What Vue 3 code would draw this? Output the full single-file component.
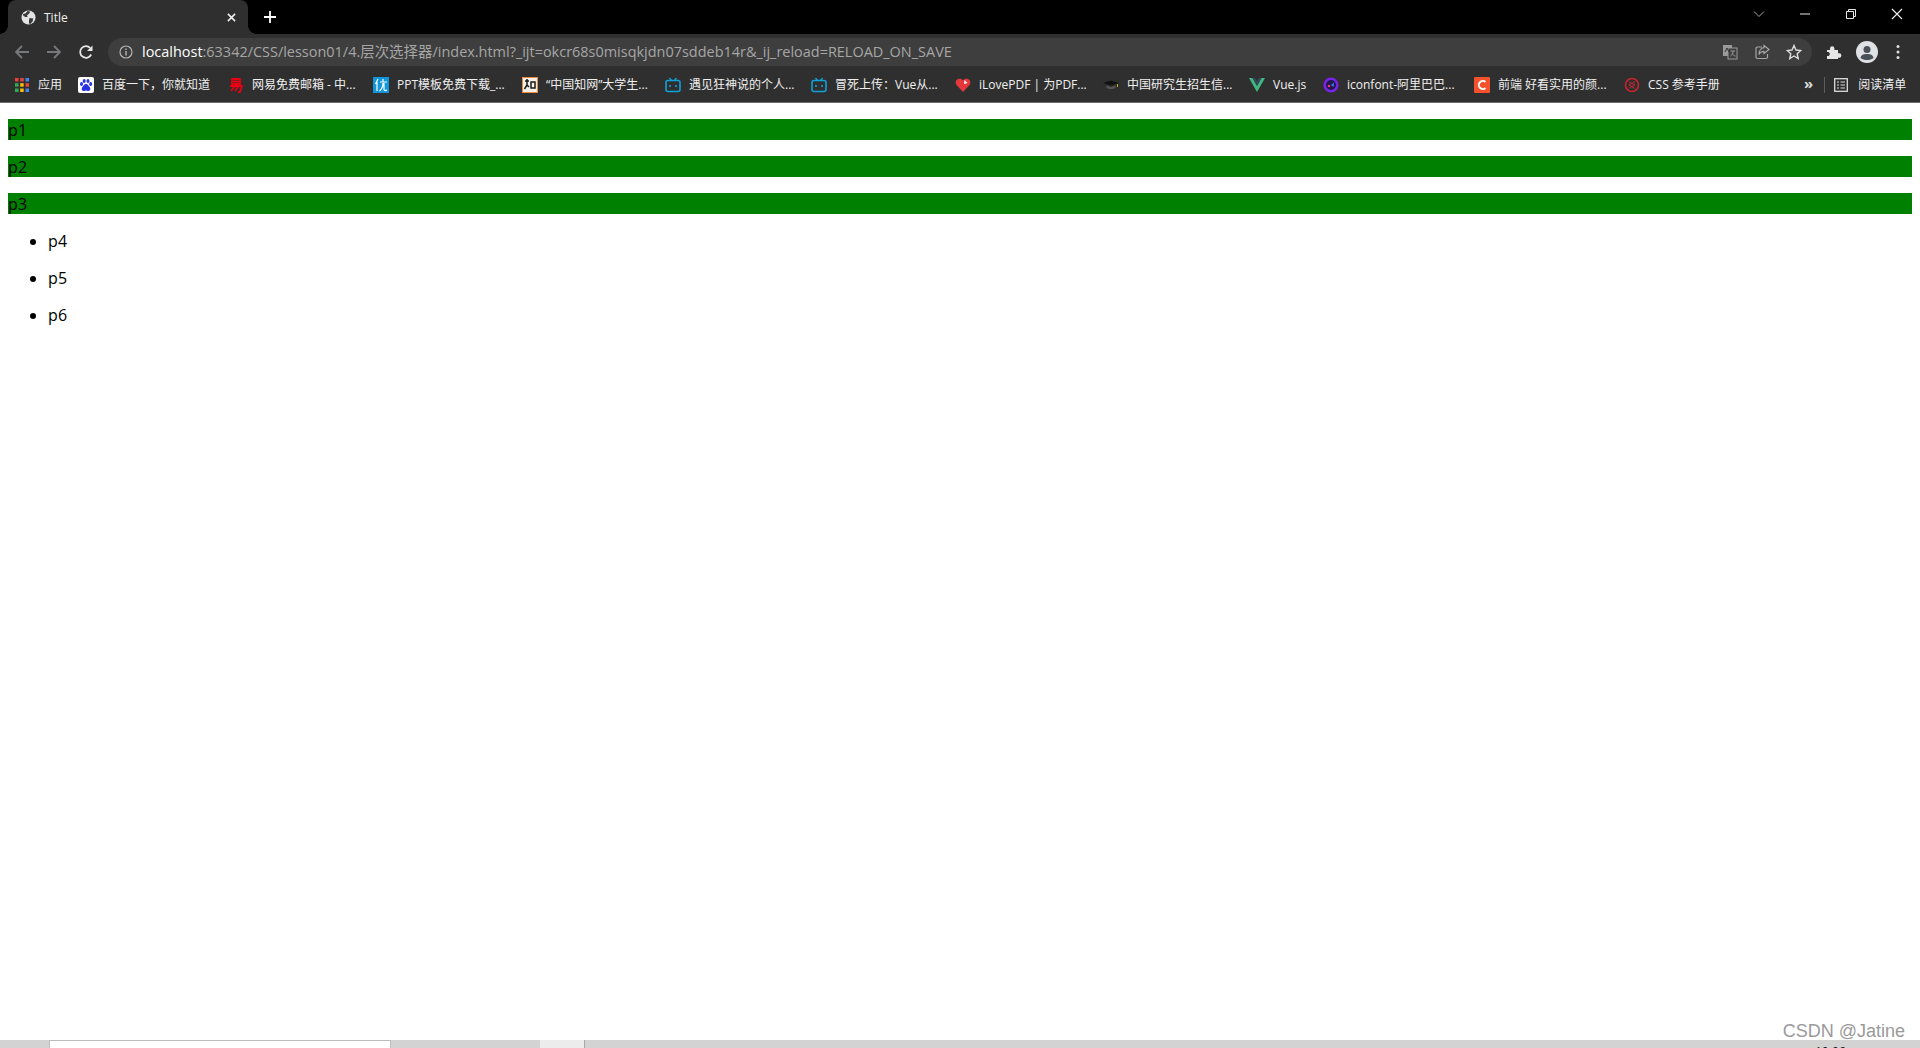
<script setup>
const bookmarks = [
  { icon: 'apps', label: '应用', width: 64 },
  { icon: 'baidu', label: '百度一下，你就知道', width: 150 },
  { icon: 'netease', label: '网易免费邮箱 - 中...', width: 145 },
  { icon: 'you', label: 'PPT模板免费下载_...', width: 149 },
  { icon: 'zhi', label: '“中国知网”大学生...', width: 143 },
  { icon: 'bili', label: '遇见狂神说的个人...', width: 146 },
  { icon: 'bili', label: '冒死上传：Vue从...', width: 144 },
  { icon: 'heart', label: 'iLovePDF | 为PDF...', width: 148 },
  { icon: 'cap', label: '中国研究生招生信...', width: 146 },
  { icon: 'vue', label: 'Vue.js', width: 74 },
  { icon: 'iconfont', label: 'iconfont-阿里巴巴...', width: 151 },
  { icon: 'c', label: '前端 好看实用的颜...', width: 150 },
  { icon: 'css', label: 'CSS 参考手册', width: 120 }
]
const paragraphs = ['p1', 'p2', 'p3']
const items = ['p4', 'p5', 'p6']
</script>

<template>
  <div class="window">
    <header class="chrome">
      <div class="tabstrip">
        <div class="tab">
          <svg class="favicon" viewBox="0 0 16 16">
            <circle cx="8" cy="8" r="7.5" fill="#e4e4e4" />
            <path d="M2 4.5 5 3.5 7 1 10 1.5 8.5 4 6.5 5.5 7 7.5 4.5 7.5 2.5 6ZM9 8.5 13 9 12.5 12 10 15 8.5 14.5 8.5 11.5Z" fill="#3a3a3a" />
          </svg>
          <span class="tab-title">Title</span>
          <svg class="tab-close" viewBox="0 0 10 10"><path d="M1 1 9 9M9 1 1 9" stroke="#f0f0f0" stroke-width="1.7" /></svg>
        </div>
        <svg class="new-tab" viewBox="0 0 12 12"><path d="M6 0V12M0 6H12" stroke="#fff" stroke-width="1.8" /></svg>
        <div class="window-controls">
          <svg class="ctl" viewBox="0 0 12 12"><path d="M1 3.5 6 8.5 11 3.5" fill="none" stroke="#a8a8a8" /></svg>
          <svg class="ctl" viewBox="0 0 12 12"><path d="M1 6H11" stroke="#e8e8e8" /></svg>
          <svg class="ctl" viewBox="0 0 12 12"><path d="M1.5 3.5H8.5V10.5H1.5ZM3.5 3.5V1.5H10.5V8.5H8.5" fill="none" stroke="#e8e8e8" /></svg>
          <svg class="ctl" viewBox="0 0 12 12"><path d="M1 1 11 11M11 1 1 11" stroke="#f0f0f0" stroke-width="1.1" /></svg>
        </div>
      </div>

      <div class="toolbar">
        <svg class="nav" viewBox="0 0 16 16"><path d="M15 8H2M8 2 2 8 8 14" fill="none" stroke="#77787a" stroke-width="1.8" /></svg>
        <svg class="nav" viewBox="0 0 16 16"><path d="M1 8H14M8 2 14 8 8 14" fill="none" stroke="#77787a" stroke-width="1.8" /></svg>
        <svg class="nav" viewBox="0 0 16 16"><path d="M13.2 10.5A5.8 5.8 0 1 1 12.2 4" fill="none" stroke="#e6e6e6" stroke-width="1.8" /><path d="M14.5 1.5V7H9Z" fill="#e6e6e6" /></svg>
        <div class="omnibox">
          <svg class="info" viewBox="0 0 14 14"><circle cx="7" cy="7" r="6" fill="none" stroke="#b4b4b4" stroke-width="1.2" /><path d="M7 6V10.5M7 3.4V5" stroke="#b4b4b4" stroke-width="1.4" /></svg>
          <div class="url"><span class="host">localhost</span>:63342/CSS/lesson01/4.层次选择器/index.html?_ijt=okcr68s0misqkjdn07sddeb14r&amp;_ij_reload=RELOAD_ON_SAVE</div>
          <svg class="omni-icon" viewBox="0 0 16 16"><rect x="1" y="1" width="9" height="11" fill="#9a9a9a" /><rect x="6" y="4" width="9" height="11" fill="#3e3e3e" stroke="#9a9a9a" /><path d="M8.5 7H13M11 7C11 10 10 11 8.500 12M10 9C11 11 12 12 13.500 12" fill="none" stroke="#9a9a9a" /><path d="M3 8 5 4 7 8" fill="none" stroke="#333" /></svg>
          <svg class="omni-icon" viewBox="0 0 16 16"><path d="M8 3H3.500A1.500 1.500 0 0 0 2 4.500V13A1.500 1.500 0 0 0 3.500 14.500H12A1.500 1.500 0 0 0 13.500 13V10" fill="none" stroke="#a6a6a6" stroke-width="1.200" /><path d="M10 1.500 15 5.500 10 9.500V7.300C7.500 7.300 6 8.300 5 10.500 5 7 7 4 10 3.700Z" fill="none" stroke="#a6a6a6" stroke-width="1.200" /></svg>
          <svg class="omni-icon" viewBox="0 0 16 16"><path d="M8 1.500 10 6 14.800 6.500 11.200 9.700 12.200 14.500 8 12 3.800 14.500 4.800 9.700 1.200 6.500 6 6Z" fill="none" stroke="#dcdcdc" stroke-width="1.400" /></svg>
        </div>
        <svg class="ext" viewBox="0 0 16 16"><path d="M1 6H4V4.500A2.200 2.200 0 0 1 8.400 4.500V6H12V9.300H13.200A2.200 2.200 0 0 1 13.200 13.700H12V15H1V12H2.500A2.200 2.200 0 0 0 2.500 8H1Z" fill="#e6e6e6" /></svg>
        <svg class="avatar" viewBox="0 0 22 22"><circle cx="11" cy="11" r="11" fill="#dfe1e5" /><circle cx="11" cy="8.500" r="3.500" fill="#4a5058" /><path d="M4.500 17C5 13.500 8 13 11 13 14 13 17 13.500 17.500 17 15.500 18.500 13.500 19 11 19 8.500 19 6.500 18.500 4.500 17Z" fill="#4a5058" /></svg>
        <svg class="menu" viewBox="0 0 4 16"><circle cx="2" cy="2.500" r="1.500" fill="#e0e0e0" /><circle cx="2" cy="8" r="1.500" fill="#e0e0e0" /><circle cx="2" cy="13.500" r="1.500" fill="#e0e0e0" /></svg>
      </div>

      <div class="bookmarks">
        <div v-for="b in bookmarks" :key="b.label" class="bookmark" :style="{ width: b.width + 'px' }">
          <svg class="bm-icon" viewBox="0 0 16 16">
            <template v-if="b.icon === 'apps'">
              <rect x="1" y="1" width="3.500" height="3.500" fill="#e8453c" /><rect x="6.200" y="1" width="3.500" height="3.500" fill="#e8453c" /><rect x="11.500" y="1" width="3.500" height="3.500" fill="#4285f4" />
              <rect x="1" y="6.200" width="3.500" height="3.500" fill="#34a853" /><rect x="6.200" y="6.200" width="3.500" height="3.500" fill="#fbbc05" /><rect x="11.500" y="6.200" width="3.500" height="3.500" fill="#e8453c" />
              <rect x="1" y="11.500" width="3.500" height="3.500" fill="#34a853" /><rect x="6.200" y="11.500" width="3.500" height="3.500" fill="#fbbc05" /><rect x="11.500" y="11.500" width="3.500" height="3.500" fill="#4285f4" />
            </template>
            <template v-else-if="b.icon === 'baidu'">
              <rect width="16" height="16" rx="2" fill="#fff" />
              <ellipse cx="3.500" cy="7" rx="1.500" ry="2" fill="#2932e1" /><ellipse cx="6.200" cy="4" rx="1.500" ry="2" fill="#2932e1" /><ellipse cx="10" cy="4" rx="1.500" ry="2" fill="#2932e1" /><ellipse cx="12.700" cy="7" rx="1.500" ry="2" fill="#2932e1" />
              <path d="M8 7C10 7 10.500 9 12 10.500 13 12.500 11.500 14 10 14 9 14 8.800 13.500 8 13.500 7.200 13.500 7 14 6 14 4.500 14 3 12.500 4 10.500 5.500 9 6 7 8 7Z" fill="#2932e1" />
            </template>
            <template v-else-if="b.icon === 'netease'">
              <path d="M4 2H12V7H4ZM4 4.500H12M2 9H14L12 15H10M7 9 3 14M10.500 9 7 14" fill="none" stroke="#e60012" stroke-width="1.800" />
            </template>
            <template v-else-if="b.icon === 'you'">
              <rect width="16" height="16" fill="#1296db" />
              <path d="M5 2 2.500 7M4 5V14M7 5H14M10 2V5M10 6C10 10 9 12 6.500 14M11 6V12.500C11 13.500 12 14 14 13" fill="none" stroke="#fff" stroke-width="1.200" />
            </template>
            <template v-else-if="b.icon === 'zhi'">
              <rect x="0.500" y="0.500" width="15" height="15" fill="#f4f1ea" stroke="#f08a3c" />
              <path d="M3 4H7M5 2V8L2.500 12M5 8 7 10M9 5H13V11H9Z" fill="none" stroke="#1a1a1a" stroke-width="1.500" />
            </template>
            <template v-else-if="b.icon === 'bili'">
              <rect x="1" y="3.500" width="14" height="11" rx="2" fill="none" stroke="#12a0d8" stroke-width="1.600" />
              <path d="M4.500 1 6.500 3.500M11.500 1 9.500 3.500" stroke="#12a0d8" stroke-width="1.400" />
              <path d="M5 8V10M11 8V10" stroke="#12a0d8" stroke-width="1.600" />
            </template>
            <template v-else-if="b.icon === 'heart'">
              <path d="M8 15 1.500 8C0 6 .5 3 3 2 5 1.300 7 2 8 3.500 9 2 11 1.300 13 2 15.500 3 16 6 14.500 8Z" fill="#e4393c" />
              <path d="M9.500 3 12.500 6 9 7Z" fill="#fff" />
            </template>
            <template v-else-if="b.icon === 'cap'">
              <path d="M0 6 8 3.500 16 6 8 8.500Z" fill="#111" />
              <path d="M3.500 8.500V11C6 12.500 10 12.500 12.500 11V8.500L8 10Z" fill="#555" />
              <path d="M14.500 7V10" stroke="#c9a227" />
            </template>
            <template v-else-if="b.icon === 'vue'">
              <path d="M0 1H3.500L8 9 12.500 1H16L8 15Z" fill="#41b883" />
              <path d="M3.500 1H6L8 4.500 10 1H12.500L8 9Z" fill="#35495e" />
            </template>
            <template v-else-if="b.icon === 'iconfont'">
              <circle cx="8" cy="8" r="6.300" fill="#1d1a4d" stroke="#7a22e8" stroke-width="2.600" />
              <path d="M8 8 11 5.500 10.500 10Z" fill="#3a7bff" /><circle cx="6" cy="9" r="1.300" fill="#ff2d78" />
            </template>
            <template v-else-if="b.icon === 'c'">
              <rect width="16" height="16" rx="1" fill="#f4512c" />
              <path d="M11.500 5A4 4 0 1 0 11.500 11" fill="none" stroke="#fff" stroke-width="1.900" />
            </template>
            <template v-else>
              <circle cx="8" cy="8" r="6.500" fill="none" stroke="#c8252c" stroke-width="1.500" />
              <path d="M5 5 11 8 5 11M11 4.500 5 8 11 11.500" fill="none" stroke="#c8252c" />
            </template>
          </svg>
          <span class="bm-label">{{ b.label }}</span>
        </div>
        <span class="overflow">»</span>
        <i class="divider"></i>
        <svg class="reading" viewBox="0 0 14 14"><rect x="0.700" y="0.700" width="12.600" height="12.600" fill="none" stroke="#dcdcdc" stroke-width="1.300" /><path d="M3 4H5M6.500 4H11M3 7H5M6.500 7H11M3 10H5M6.500 10H11" stroke="#dcdcdc" stroke-width="1.200" /></svg>
        <span class="reading-label">阅读清单</span>
      </div>
    </header>

    <main class="page">
      <p v-for="p in paragraphs" :key="p" class="green">{{ p }}</p>
      <ul class="list">
        <li v-for="i in items" :key="i"><p>{{ i }}</p></li>
      </ul>
    </main>

    <footer class="taskbar">
      <div class="task-white"></div>
      <div class="task-light"></div>
      <i class="task-line"></i>
      <span class="clock">10:06</span>
    </footer>
    <span class="watermark">CSDN @Jatine</span>
  </div>
</template>

<style>
html, body { margin: 0; background: #fff; overflow: hidden; }
</style>

<style scoped>
.window {
  position: relative;
  width: 1920px;
  height: 1048px;
  display: flex;
  flex-direction: column;
  overflow: hidden;
  font-family: "Open Sans", "Noto Sans CJK SC", sans-serif;
}
.chrome { flex: none; }
.tabstrip {
  height: 34px;
  background: #000;
  display: flex;
  align-items: stretch;
  padding-left: 8px;
}
.tab {
  position: relative;
  width: 240px;
  box-sizing: border-box;
  background: #2f2f2f;
  border-radius: 8px 8px 0 0;
  display: flex;
  align-items: center;
  padding: 0 12px 0 13px;
  color: #f0f0f0;
  font-size: 12px;
}
.tab::before, .tab::after {
  content: "";
  position: absolute;
  bottom: 0;
  width: 8px;
  height: 8px;
}
.tab::before { left: -8px; background: radial-gradient(circle at 0 0, #000 7.5px, #2f2f2f 8px); }
.tab::after { right: -8px; background: radial-gradient(circle at 100% 0, #000 7.5px, #2f2f2f 8px); }
.favicon { width: 15px; height: 15px; flex: none; margin-right: 8px; }
.tab-title { flex: 1; }
.tab-close { width: 9px; height: 9px; flex: none; }
.new-tab { width: 12px; height: 12px; margin: 11px 0 0 16px; flex: none; }
.window-controls {
  margin-left: auto;
  display: flex;
  gap: 34px;
  padding: 8px 17px 0 0;
}
.ctl { width: 12px; height: 12px; flex: none; }
.toolbar {
  height: 34px;
  background: #2f2f2f;
  display: flex;
  align-items: center;
  box-sizing: border-box;
  padding: 4px 0 2px 14px;
}
.nav { width: 16px; height: 16px; flex: none; margin-right: 16px; }
.nav:nth-child(3) { margin-right: 14px; }
.omnibox {
  width: 1704px;
  height: 28px;
  flex: none;
  box-sizing: border-box;
  background: #3e3e3e;
  border-radius: 14px;
  display: flex;
  align-items: center;
  padding: 0 10px 0 11px;
}
.info { width: 14px; height: 14px; flex: none; margin-right: 9px; }
.url {
  flex: 1;
  color: #a6a6a6;
  font-size: 14.46px;
  line-height: 20px;
  white-space: nowrap;
}
.host { color: #fff; }
.omni-icon { width: 16px; height: 16px; flex: none; margin-left: 16px; }
.ext { width: 16px; height: 16px; flex: none; margin-left: 14px; }
.avatar { width: 22px; height: 22px; flex: none; margin-left: 14px; }
.menu { width: 4px; height: 16px; flex: none; margin-left: 18px; }
.bookmarks {
  height: 35px;
  box-sizing: border-box;
  background: #2f2f2f;
  border-bottom: 1px solid #6b6b6b;
  display: flex;
  align-items: center;
  padding-left: 14px;
  color: #f0f0f0;
  font-size: 12px;
}
.bookmark {
  flex: none;
  display: flex;
  align-items: center;
  white-space: nowrap;
}
.bm-icon { width: 16px; height: 16px; flex: none; margin-right: 8px; }
.bm-label, .reading-label { margin-top: -2px; }
.overflow {
  margin-left: 60px;
  font-size: 15px;
  font-weight: 700;
  color: #dcdcdc;
  line-height: 1;
  margin-top: -3px;
}
.divider { width: 1px; height: 16px; background: #5c5c5c; margin-left: 11px; flex: none; }
.reading { width: 14px; height: 14px; flex: none; margin-left: 9px; }
.reading-label { margin-left: 10px; white-space: nowrap; }

.page {
  flex: 1;
  min-height: 0;
  padding: 16px 8px 0;
  color: #000;
  font-size: 16px;
  line-height: 21px;
  letter-spacing: 0.2px;
}
.page p { margin: 0; padding-top: 1px; line-height: 20px; }
.green { background: #008000; margin-bottom: 16px !important; }
.list { margin: 0; padding: 0 0 0 40px; }
.list li { margin-bottom: 16px; }
.taskbar {
  flex: none;
  position: relative;
  height: 8px;
  background: #d3d3d3;
  overflow: hidden;
}
.task-white {
  position: absolute;
  left: 49px;
  top: 0;
  width: 342px;
  height: 8px;
  box-sizing: border-box;
  background: #fff;
  border: 1px solid #bdbdbd;
  border-bottom: 0;
}
.task-light { position: absolute; left: 540px; top: 0; width: 44px; height: 8px; background: #ececec; }
.task-line { position: absolute; left: 584px; top: 0; width: 1px; height: 8px; background: #a8a8a8; }
.clock { position: absolute; left: 1815px; top: 5px; font-size: 12px; line-height: 14px; color: #111; }
.watermark {
  position: absolute;
  right: 15px;
  top: 1021px;
  font-family: "Liberation Sans", sans-serif;
  font-size: 18px;
  line-height: 20px;
  color: #9a9a9a;
}
</style>
